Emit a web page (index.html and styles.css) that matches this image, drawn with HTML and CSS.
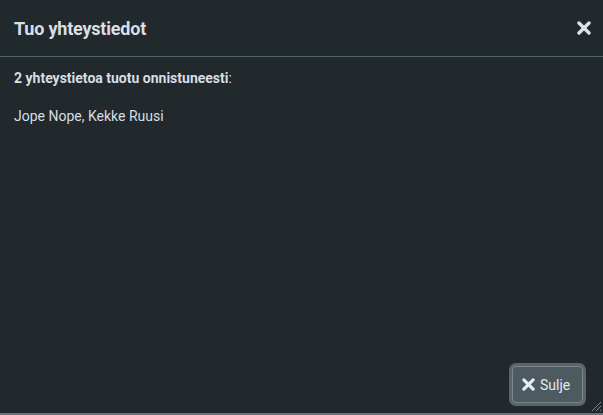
FILE: index.html
```html
<!DOCTYPE html>
<html lang="fi">
<head>
<meta charset="utf-8">
<title>Tuo yhteystiedot</title>
<link rel="stylesheet" href="styles.css">
</head>
<body>
<div class="dialog">
  <div class="titlebar">
    <span class="title">Tuo yhteystiedot</span>
    <button class="close" aria-label="Sulje">
      <svg width="14" height="14" viewBox="0 0 14 14"><path d="M2 2 L12 12 M12 2 L2 12" stroke="#dce3e8" stroke-width="3.4" stroke-linecap="round"/></svg>
    </button>
  </div>
  <div class="content">
    <p class="summary"><b>2 yhteystietoa tuotu onnistuneesti</b>:</p>
    <p>Jope Nope, Kekke Ruusi</p>
  </div>
  <div class="buttonpane">
    <button class="btn">
      <svg width="13" height="13" viewBox="0 0 14 14"><path d="M2 2 L12 12 M12 2 L2 12" stroke="#e6ecef" stroke-width="3.4" stroke-linecap="round"/></svg>
      <span>Sulje</span>
    </button>
  </div>
  <div class="resize">
    <svg width="12" height="12" viewBox="0 0 12 12"><path d="M11 2 L2 11 M11 6 L6 11 M11 10 L10 11" stroke="#7d8a8e" stroke-width="1"/></svg>
  </div>
</div>
</body>
</html>
```

FILE: styles.css
```css
html, body {
  margin: 0;
  padding: 0;
  background: #22292d;
}
body {
  font-family: Roboto, "Liberation Sans", sans-serif;
  color: #d7dee3;
}
.dialog {
  position: relative;
  width: 603px;
  height: 415px;
  box-sizing: border-box;
  border-bottom: 2px solid #6b7478;
  display: flex;
  flex-direction: column;
  background: #22292d;
}
.titlebar {
  height: 57px;
  box-sizing: border-box;
  border-bottom: 1px solid #4f6463;
  display: flex;
  align-items: center;
  justify-content: space-between;
  padding: 0 11px 0 14px;
}
.title {
  font-size: 18px;
  font-weight: bold;
  color: #d8dfe5;
  letter-spacing: -0.2px;
}
.close {
  background: none;
  border: 0;
  padding: 0;
  width: 16px;
  height: 16px;
  display: flex;
  align-items: center;
  justify-content: center;
  cursor: pointer;
}
.content {
  flex: 1;
  padding: 11px 14px 0;
  font-size: 14px;
  line-height: 20px;
}
.content p {
  margin: 0 0 18px;
}
.summary b {
  font-weight: bold;
}
.buttonpane {
  display: flex;
  justify-content: flex-end;
  padding: 0 20px 10px 0;
}
.btn {
  display: flex;
  align-items: center;
  gap: 5px;
  height: 37px;
  width: 71px;
  padding: 0 0 0 9px;
  box-sizing: border-box;
  background: #4d5b60;
  border: 1px solid #7a878b;
  border-radius: 4px;
  box-shadow: 0 0 0 3px #596569;
  color: #e3e9ec;
  font-family: Roboto, "Liberation Sans", sans-serif;
  font-size: 14px;
  cursor: pointer;
}
.resize {
  position: absolute;
  right: 1px;
  bottom: 1px;
  width: 12px;
  height: 12px;
  line-height: 0;
}
```
